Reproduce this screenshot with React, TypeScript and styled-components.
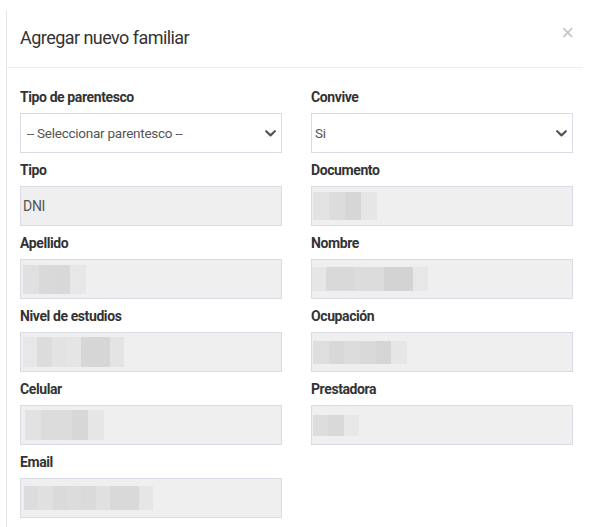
import React from "react";
import styled, { createGlobalStyle } from "styled-components";

const GlobalStyle = createGlobalStyle`
  html, body { margin: 0; padding: 0; background: #ffffff; }
  body {
    font-family: "Roboto", "Liberation Sans", sans-serif;
    color: #333333;
  }
`;

const Modal = styled.div`
  margin: 10px 0 0 6px;
  width: 577px;
  min-height: 517px;
  border-left: 1px solid #e6e6e6;
  box-sizing: border-box;
  background: #ffffff;
`;

const Header = styled.div`
  height: 58px;
  box-sizing: border-box;
  border-bottom: 1px solid #eeeeee;
  display: flex;
  align-items: center;
  justify-content: space-between;
  padding: 0 9px 2px 13px;
`;

const Title = styled.h4`
  margin: 0;
  font-size: 18px;
  font-weight: 400;
  letter-spacing: -0.55px;
  color: #333333;
  line-height: 24px;
`;

const Close = styled.button`
  border: 0;
  background: transparent;
  padding: 0;
  margin: 0 0 10px 0;
  font-family: "Liberation Sans", sans-serif;
  font-size: 22px;
  font-weight: 300;
  line-height: 1;
  color: #c4c4c4;
  cursor: pointer;
`;

const Body = styled.div`
  display: grid;
  grid-template-columns: 262px 262px;
  column-gap: 29px;
  row-gap: 6px;
  padding: 18px 10px 0 13px;
`;

const Field = styled.div`
  display: flex;
  flex-direction: column;
`;

const Label = styled.label`
  font-weight: 700;
  font-size: 14px;
  letter-spacing: -0.4px;
  line-height: 20px;
  margin: 1px 0 6px;
  color: #333333;
`;

const SelectBox = styled.div<{ $pad: number }>`
  height: 40px;
  box-sizing: border-box;
  border: 1px solid #d9dce4;
  background: #ffffff;
  display: flex;
  align-items: center;
  justify-content: space-between;
  padding: 0 5px 0 ${(p) => p.$pad}px;
  font-size: 13.5px;
  letter-spacing: -0.25px;
  color: #555555;
`;

const InputBox = styled.div<{ $pad: number }>`
  height: 40px;
  box-sizing: border-box;
  border: 1px solid #d9dce4;
  background: #efefef;
  display: flex;
  align-items: center;
  padding: 0 0 0 ${(p) => p.$pad}px;
  font-size: 14px;
  letter-spacing: -0.3px;
  color: #555555;
`;

const Redacted = styled.div<{ $w: number; $h: number; $shades: string[] }>`
  width: ${(p) => p.$w}px;
  height: ${(p) => p.$h}px;
  background: ${(p) => {
    const n = p.$shades.length;
    const stops = p.$shades
      .map((c, i) => `${c} ${(i * 100) / n}% ${((i + 1) * 100) / n}%`)
      .join(", ");
    return `linear-gradient(90deg, ${stops})`;
  }};
`;

const Chevron = () => (
  <svg width="11" height="7" viewBox="0 0 11 7" aria-hidden="true">
    <path d="M1.2 1.2 L5.5 5.4 L9.8 1.2" fill="none" stroke="#555" strokeWidth="2.2" strokeLinecap="round" strokeLinejoin="round" />
  </svg>
);

type Blur = { w: number; h: number; shades: string[] };

type FieldDef =
  | { label: string; kind: "select"; value: string; pad: number }
  | { label: string; kind: "text"; value: string; pad: number }
  | { label: string; kind: "blur"; blur: Blur; pad: number };

const fields: FieldDef[] = [
  { label: "Tipo de parentesco", kind: "select", value: "-- Seleccionar parentesco --", pad: 6 },
  { label: "Convive", kind: "select", value: "Si", pad: 3 },
  { label: "Tipo", kind: "text", value: "DNI", pad: 2 },
  {
    label: "Documento",
    kind: "blur",
    pad: 1,
    blur: { w: 64, h: 28, shades: ["#e3e3e3", "#dcdcdc", "#d6d6d6", "#e6e6e6"] },
  },
  {
    label: "Apellido",
    kind: "blur",
    pad: 2,
    blur: { w: 63, h: 29, shades: ["#e0e0e0", "#d9d9d9", "#d8d8d8", "#e7e7e7"] },
  },
  {
    label: "Nombre",
    kind: "blur",
    pad: 0,
    blur: { w: 116, h: 24, shades: ["#e6e6e6", "#d9d9d9", "#d9d9d9", "#dcdcdc", "#dcdcdc", "#d3d3d3", "#d3d3d3", "#e7e7e7"] },
  },
  {
    label: "Nivel de estudios",
    kind: "blur",
    pad: 2,
    blur: { w: 101, h: 30, shades: ["#e7e7e7", "#dcdcdc", "#e3e3e3", "#e5e5e5", "#d6d6d6", "#d6d6d6", "#e4e4e4"] },
  },
  {
    label: "Ocupación",
    kind: "blur",
    pad: 1,
    blur: { w: 94, h: 23, shades: ["#dedede", "#d8d8d8", "#dcdcdc", "#d9d9d9", "#d5d5d5", "#e6e6e6"] },
  },
  {
    label: "Celular",
    kind: "blur",
    pad: 4,
    blur: { w: 79, h: 30, shades: ["#e2e2e2", "#dcdcdc", "#dcdcdc", "#d7d7d7", "#e6e6e6"] },
  },
  {
    label: "Prestadora",
    kind: "blur",
    pad: 1,
    blur: { w: 46, h: 21, shades: ["#dddddd", "#d9d9d9", "#e8e8e8"] },
  },
  {
    label: "Email",
    kind: "blur",
    pad: 3,
    blur: { w: 129, h: 24, shades: ["#dcdcdc", "#e0e0e0", "#dadada", "#dcdcdc", "#dadada", "#e0e0e0", "#d9d9d9", "#d9d9d9", "#e6e6e6"] },
  },
];

export default function App() {
  return (
    <>
      <GlobalStyle />
      <Modal>
        <Header>
          <Title>Agregar nuevo familiar</Title>
          <Close aria-label="Cerrar">×</Close>
        </Header>
        <Body>
          {fields.map((f) => (
            <Field key={f.label}>
              <Label>{f.label}</Label>
              {f.kind === "select" ? (
                <SelectBox $pad={f.pad}>
                  <span>{f.value}</span>
                  <Chevron />
                </SelectBox>
              ) : f.kind === "text" ? (
                <InputBox $pad={f.pad}>{f.value}</InputBox>
              ) : (
                <InputBox $pad={f.pad}>
                  <Redacted $w={f.blur.w} $h={f.blur.h} $shades={f.blur.shades} />
                </InputBox>
              )}
            </Field>
          ))}
        </Body>
      </Modal>
    </>
  );
}
